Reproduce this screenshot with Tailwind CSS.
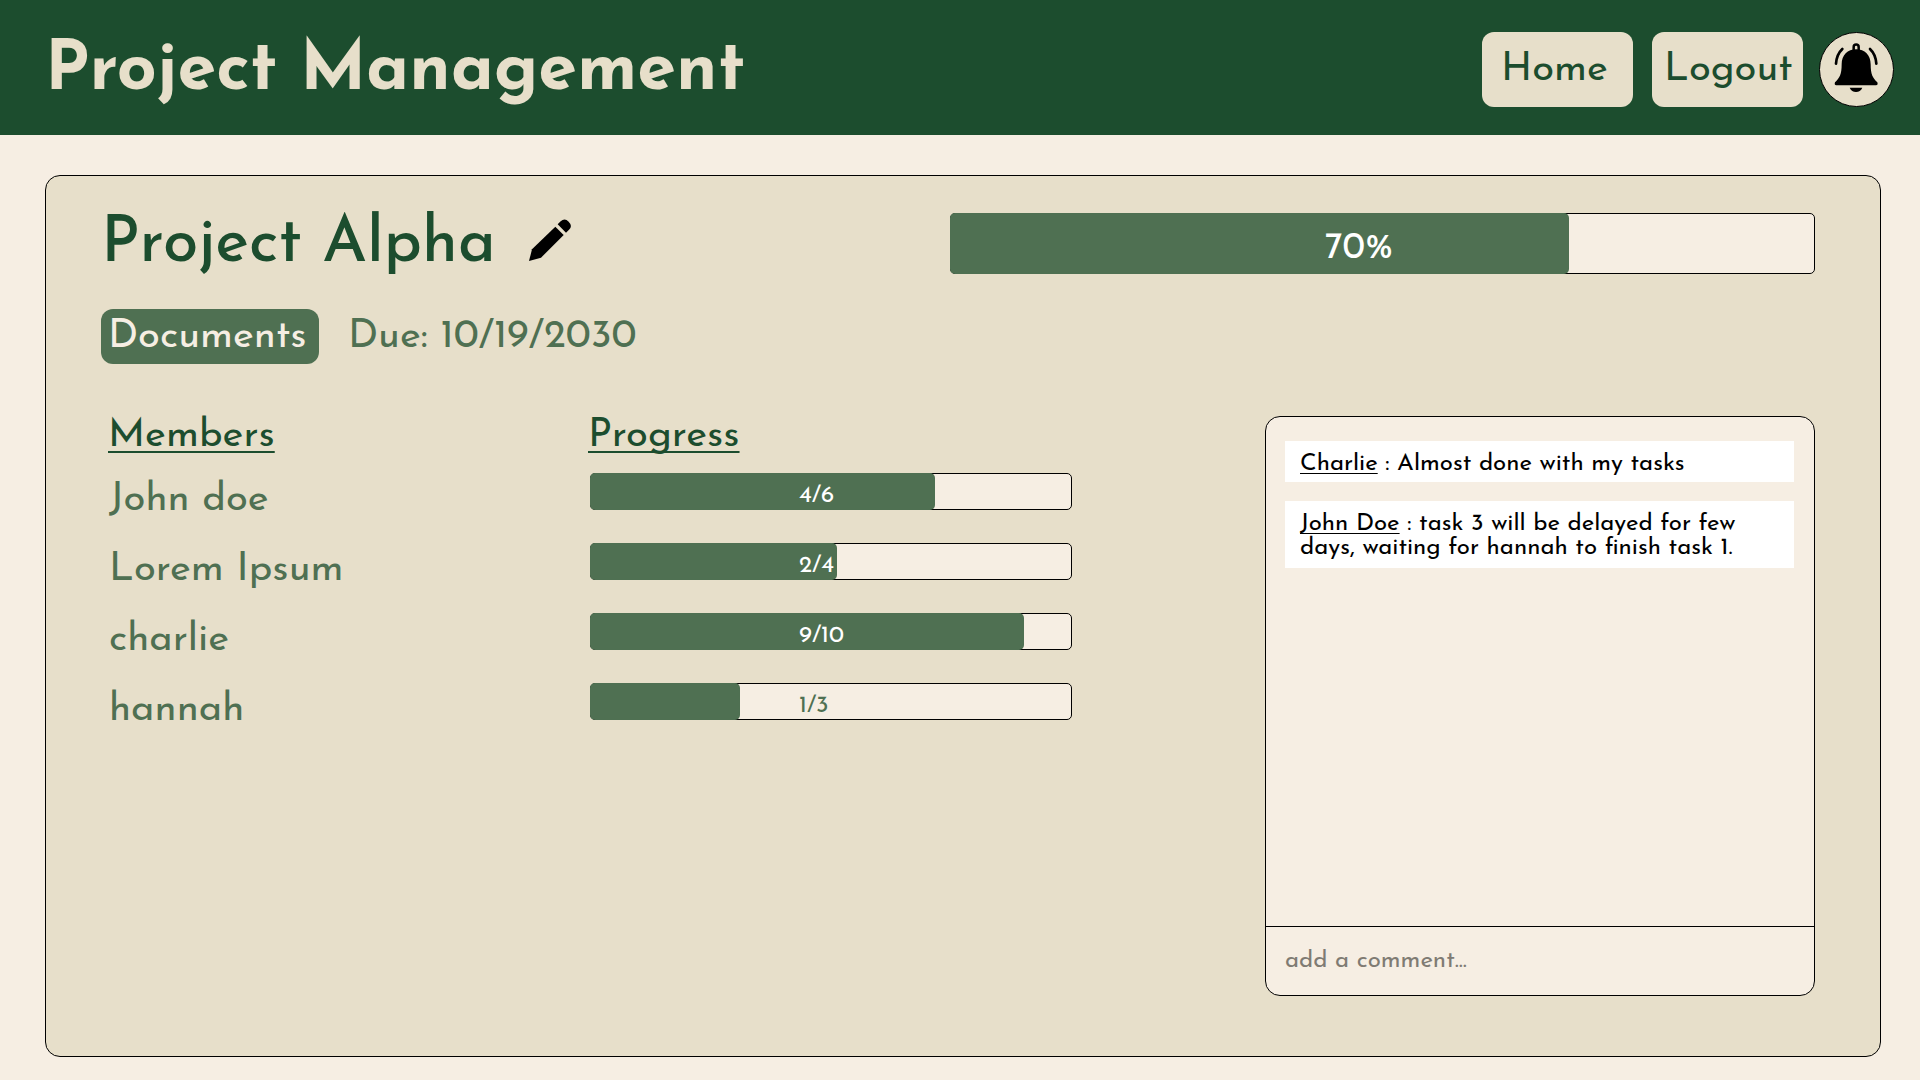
<!DOCTYPE html>
<html lang="en">
<head>
<meta charset="utf-8">
<title>Project Management</title>
<script src="https://cdn.jsdelivr.net/npm/@tailwindcss/browser@4"></script>
</head>
<body class="h-[1080px] w-[1920px] overflow-hidden bg-[#f6eee3] font-['Josefin_Sans','Lato',sans-serif] leading-none text-[#4f7052]">

<header class="flex h-[135px] items-start bg-[#1c4d2e] pl-[45px] pr-[26px]">
  <h1 class="mt-[37px] text-[70px] leading-none font-bold whitespace-nowrap text-[#e7dfca]">Project Management</h1>
  <nav class="mt-8 ml-auto flex text-[40px] leading-none text-[#1c4d2e]">
    <a class="h-[75px] w-[151px] rounded-xl bg-[#e7dfca] pt-[18px] pl-[19px]">Home</a>
    <a class="ml-[19px] h-[75px] w-[151px] rounded-xl bg-[#e7dfca] pt-[18px] pl-3">Logout</a>
    <button class="ml-4 size-[75px] rounded-full border border-black bg-[#e7dfca]" aria-label="Notifications">
      <svg class="size-full" viewBox="31 24 219 219" fill="none" stroke="#000" stroke-linecap="round">
        <path d="M132 78V66a7.5 7.5 0 0 1 15 0V78" stroke-width="7.5"/>
        <path d="M96 118C96 90 114 73 139.500 73C165 73 183 90 183 118C183 148 189 159 203 172Q206 181 199 181H80Q73 181 76 172C90 159 96 148 96 118Z" fill="#000" stroke="none"/>
        <path d="M120 188H158Q152 201 139 201Q126 201 120 188Z" fill="#000" stroke="none"/>
        <path d="M98 72Q81 88 79 116M181 72Q198 88 200 116" stroke-width="8"/>
      </svg>
    </button>
  </nav>
</header>

<main class="mt-10 ml-[45px] h-[882px] w-[1836px] rounded-[15px] border border-black bg-[#e7dfca] pt-[27px] pl-[55px]">
  <section class="flex h-[106px]">
    <h2 class="w-[428px] pt-[10px] text-[64px] leading-none font-medium whitespace-nowrap text-[#1c4d2e]">Project Alpha</h2>
    <svg class="mt-4 h-[42px] w-[42px]" viewBox="42 41 126 126" aria-label="Edit">
      <path d="M121 64L146 89L78 157L42 167L51 132Z"/>
      <path d="M128 57L137 48Q149 36 161 49Q174 62 162 73L153 82Z"/>
    </svg>
    <div class="mt-[10px] ml-[379px] grid h-[61px] w-[865px]">
      <div class="rounded-[5px] border border-black bg-[#f6eee3] [grid-area:1/1]"></div>
      <div class="rounded-[5px] bg-[#4f7052] [grid-area:1/1]" style="width:619px"></div>
      <span class="pt-[18px] pl-[375px] text-[36px] leading-none text-white [grid-area:1/1]">70%</span>
    </div>
  </section>

  <section class="flex h-[101px] text-[40px] leading-none">
    <button class="flex h-[55px] w-[218px] items-start rounded-xl bg-[#4f7052] pt-2 pl-[7px] text-[#f6eee3]">Documents</button>
    <p class="mt-2 ml-[29px]">Due: 10/19/2030</p>
  </section>

  <section class="flex pl-[7px]">
    <div class="w-[480px] pt-[6px] text-[40px] leading-none">
      <h3 class="h-16 text-[#1c4d2e] underline decoration-2 underline-offset-[5px] [text-decoration-skip-ink:none]">Members</h3>
      <p class="h-[70px] pl-px">John doe</p>
      <p class="h-[70px] pl-px">Lorem Ipsum</p>
      <p class="h-[70px] pl-px">charlie</p>
      <p class="h-[70px] pl-px">hannah</p>
    </div>
    <div class="w-[677px]">
      <h3 class="h-[63px] pt-[6px] text-[40px] leading-none text-[#1c4d2e] underline decoration-2 underline-offset-[5px] [text-decoration-skip-ink:none]">Progress</h3>
      <div class="ml-[2px] flex w-[482px] flex-col gap-[33px] text-[24px] leading-none text-white">
        <div class="grid h-[37px]">
          <div class="rounded-[5px] border border-black bg-[#f6eee3] [grid-area:1/1]"></div>
          <div class="rounded-[5px] bg-[#4f7052] [grid-area:1/1]" style="width:345px"></div>
          <span class="pt-[11px] pl-[209px] [grid-area:1/1]">4/6</span>
        </div>
        <div class="grid h-[37px]">
          <div class="rounded-[5px] border border-black bg-[#f6eee3] [grid-area:1/1]"></div>
          <div class="rounded-[5px] bg-[#4f7052] [grid-area:1/1]" style="width:247px"></div>
          <span class="pt-[11px] pl-[209px] [grid-area:1/1]">2/4</span>
        </div>
        <div class="grid h-[37px]">
          <div class="rounded-[5px] border border-black bg-[#f6eee3] [grid-area:1/1]"></div>
          <div class="rounded-[5px] bg-[#4f7052] [grid-area:1/1]" style="width:434px"></div>
          <span class="pt-[11px] pl-[209px] [grid-area:1/1]">9/10</span>
        </div>
        <div class="grid h-[37px]">
          <div class="rounded-[5px] border border-black bg-[#f6eee3] [grid-area:1/1]"></div>
          <div class="rounded-[5px] bg-[#4f7052] [grid-area:1/1]" style="width:150px"></div>
          <span class="pt-[11px] pl-[209px] text-[#4f7052] [grid-area:1/1]">1/3</span>
        </div>
      </div>
    </div>
    <aside class="mt-[6px] flex h-[580px] w-[550px] flex-col overflow-hidden rounded-[15px] border border-black bg-[#f6eee3] text-[24px] leading-6 text-black">
      <div class="flex grow flex-col gap-[19px] pt-6 pr-5 pl-[19px]">
        <p class="h-[41px] bg-white pt-[11px] pl-[15px] whitespace-nowrap"><span class="underline decoration-1 underline-offset-[3px] [text-decoration-skip-ink:none]">Charlie</span> : Almost done with my tasks</p>
        <p class="h-[67px] bg-white pt-[11px] pl-[15px] whitespace-nowrap"><span class="underline decoration-1 underline-offset-[3px] [text-decoration-skip-ink:none]">John Doe</span> : task 3 will be delayed for few<br>days, waiting for hannah to finish task 1.</p>
      </div>
      <input class="h-[69px] border-t border-black pl-[19px] placeholder:text-[#7f7b73]" placeholder="add a comment...">
    </aside>
  </section>
</main>
</body>
</html>
